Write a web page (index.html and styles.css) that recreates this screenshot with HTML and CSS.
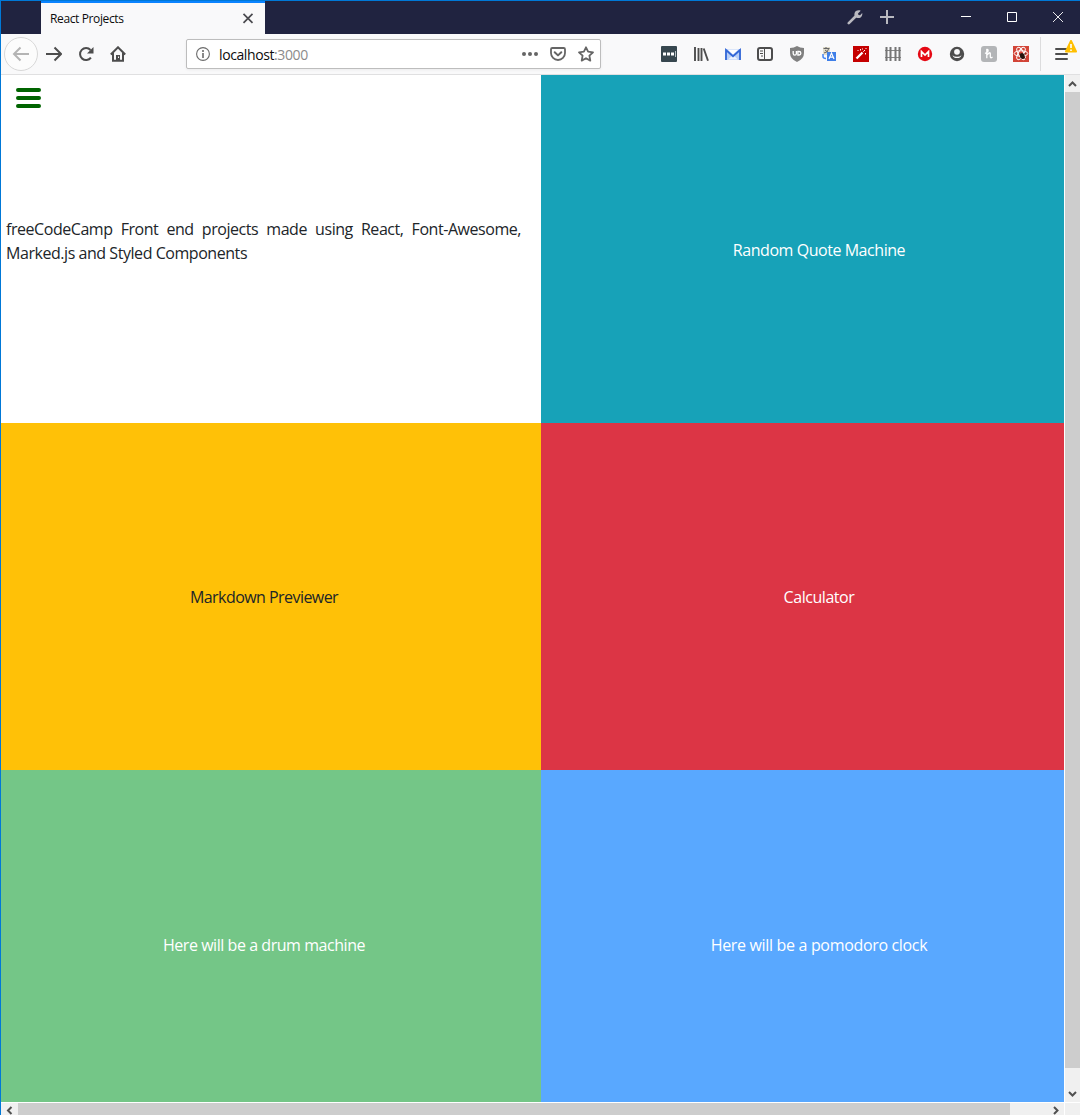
FILE: index.html
```html
<!DOCTYPE html>
<html lang="en">
<head>
<meta charset="utf-8">
<title>React Projects</title>
<link rel="stylesheet" href="styles.css">
</head>
<body>
<div class="window">
  <header class="titlebar">
    <div class="tab"><span class="tab-title">React Projects</span>
      <svg class="tab-close" width="12" height="12" viewBox="0 0 12 12"><path d="M1.500 .8l9 9M10.500 .8l-9 9" stroke="#4a4a4f" stroke-width="1.700"/></svg>
    </div>
    <div class="tab-tools">
      <svg width="16" height="16" viewBox="0 0 16 16"><path d="M1.800 14.200L8.500 7.500" stroke="#b9b9c0" stroke-width="2.600" stroke-linecap="round"/><path d="M13.700 1.700L11 4.400l.5 1.600 1.600.2 2.100-2.300c.6 2.500-1.200 5.100-3.700 5.100-2.700 0-4.600-2.200-4-4.600C8 2 10.800.7 13.700 1.700z" fill="#b9b9c0"/></svg>
      <svg width="16" height="16" viewBox="0 0 16 16"><path d="M8 1v14M1 8h14" stroke="#b9b9c0" stroke-width="2"/></svg>
    </div>
    <div class="window-controls">
      <svg width="12" height="12" viewBox="0 0 12 12"><path d="M1 5.500h10" stroke="#fff"/></svg>
      <svg width="12" height="12" viewBox="0 0 12 12"><path d="M1.500 1.500h9v9h-9z" fill="none" stroke="#fff"/></svg>
      <svg width="12" height="12" viewBox="0 0 12 12"><path d="M1 1l10 10M11 1L1 11" stroke="#fff" stroke-width=".9"/></svg>
    </div>
  </header>

  <div class="toolbar">
    <div class="back"><svg width="18" height="16" viewBox="0 0 18 16"><path d="M17 8H2M8.500 1.500L2 8l6.500 6.500" fill="none" stroke="#b4b4b4" stroke-width="2"/></svg></div>
    <div class="nav">
      <svg width="16" height="16" viewBox="0 0 16 16"><path d="M0 8h14.500M8.500 1.500L15 8l-6.500 6.500" fill="none" stroke="#4d4d4d" stroke-width="2"/></svg>
      <svg width="16" height="16" viewBox="0 0 16 16"><path d="M12.900 11.600A6 6 0 1 1 12.500 4" fill="none" stroke="#4d4d4d" stroke-width="2"/><path d="M15.500 1v6.500H9z" fill="#4d4d4d"/></svg>
      <svg width="16" height="16" viewBox="0 0 16 16"><path d="M.8 8.500L8 1.300l7.200 7.200M3 7v7.800h10V7" fill="none" stroke="#4d4d4d" stroke-width="2"/><path d="M6 9h4v6H6z" fill="#4d4d4d"/><path d="M8 10.500h1v1.500H8z" fill="#f9f9fa"/></svg>
    </div>
    <div class="urlbar">
      <svg width="14" height="14" viewBox="0 0 14 14"><circle cx="7" cy="7" r="6.400" fill="none" stroke="#6b6b6b" stroke-width="1.100"/><path d="M7 6v5M7 3v2" stroke="#6b6b6b" stroke-width="1.600"/></svg>
      <span class="url">localhost<span class="port">:3000</span></span>
      <svg width="16" height="16" viewBox="0 0 16 16"><g fill="#656565"><circle cx="2" cy="8" r="2"/><circle cx="8" cy="8" r="2"/><circle cx="14" cy="8" r="2"/></g></svg>
      <svg width="16" height="16" viewBox="0 0 16 16"><path d="M2.300 2h11.400q1.300 0 1.300 1.300V7a7 7 0 0 1-14 0V3.300Q1 2 2.300 2z" fill="none" stroke="#656565" stroke-width="1.800"/><path d="M4.700 6.200L8 9.400l3.300-3.200" fill="none" stroke="#656565" stroke-width="2" stroke-linecap="round" stroke-linejoin="round"/></svg>
      <svg width="16" height="16" viewBox="0 0 16 16"><path d="M8 1.300l2.100 4.400 4.900.6-3.600 3.400.9 4.900L8 12.200l-4.300 2.400.9-4.900L1 6.300l4.900-.6z" fill="none" stroke="#656565" stroke-width="1.800" stroke-linejoin="round"/></svg>
    </div>
    <div class="extensions">
      <svg width="16" height="16" viewBox="0 0 16 16"><rect width="16" height="16" rx="1" fill="#37474f"/><path d="M2 6.500h3v3H2zM6 6.500h3v3H6zM10 6.500h3v3h-3z" fill="#fff"/><path d="M14.500 5v6" stroke="#b9c1c5"/></svg>
      <svg width="16" height="16" viewBox="0 0 16 16"><path d="M2 1v14M5.500 2v13M8.500 2v13M10.700 2.500L15 14.700" stroke="#4d4d4d" stroke-width="1.900"/></svg>
      <svg width="16" height="16" viewBox="0 0 16 16"><path d="M0 3h16v11H0z" fill="#b8cff6"/><path d="M2.500 3.500h11L8 8.500z" fill="#fff"/><path d="M3 13.500l5-4.500 5 4.500z" fill="#edf3fd"/><path d="M1 14V4l7 6.200L15 4v10" fill="none" stroke="#3367d6" stroke-width="1.800"/></svg>
      <svg width="16" height="16" viewBox="0 0 16 16"><rect x="1" y="2" width="14" height="12" rx="2" fill="none" stroke="#4d4d4d" stroke-width="2"/><path d="M7.500 2v12M3 5h3M3 7.500h3M4 10h2" stroke="#4d4d4d"/></svg>
      <svg width="16" height="16" viewBox="0 0 16 16"><path d="M8 0q3 2 7 2v5q0 6-7 9Q1 13 1 7V2q4 0 7-2z" fill="#808080"/><path d="M4.200 5v2.500q0 1.600 1.600 1.600T7.400 7.500V5M8.900 5.500h1.200a1.700 1.700 0 0 1 0 3.500H8.900z" fill="none" stroke="#fff" stroke-width="1.300"/></svg>
      <svg width="16" height="16" viewBox="0 0 16 16"><path d="M2 1h7v8H2z" fill="#e2ddcc"/><path d="M2.500 2.500h6M5 1v1.500M7.500 3Q7 6.500 3 7M4 4l4 3" fill="none" stroke="#666" stroke-width="1"/><path d="M2 8v2.500q0 2 3 2" fill="none" stroke="#4285f4" stroke-width="1.500"/><path d="M6 6h9v9H6z" fill="#3f7fe8"/><path d="M8 13l2.500-6 2.500 6M9 11.100h3" fill="none" stroke="#fff" stroke-width="1.200"/></svg>
      <svg width="16" height="16" viewBox="0 0 16 16"><path d="M0 0h16v16H0z" fill="#c50000"/><path d="M3.500 12.500l6-6" stroke="#fff" stroke-width="2.300"/><path d="M10.300 5.700L12 4M7.500 3v1.500M5 4v1M12.500 7v1.500M12.500 2.500h1M9 3h1" stroke="#fff" stroke-width="1"/></svg>
      <svg width="16" height="16" viewBox="0 0 16 16"><path d="M0 4.500h16M0 11.500h16" stroke="#858585" stroke-width="1"/><path d="M1.500 1v14M5.500 1v14M10.500 1v14M14.500 1v14" stroke="#757575" stroke-width="2"/></svg>
      <svg width="16" height="16" viewBox="0 0 16 16"><circle cx="8" cy="8" r="7.200" fill="#e50914"/><path d="M4.500 11V5.500L8 9l3.500-3.500V11" fill="none" stroke="#fff" stroke-width="1.700"/></svg>
      <svg width="16" height="16" viewBox="0 0 16 16"><circle cx="8" cy="8" r="7.200" fill="#4d4d4d"/><circle cx="8" cy="5.800" r="2.900" fill="#f9f9fa"/><path d="M3.500 9.200a4.700 4.100 0 0 0 9 0Q11 10.800 8 10.800T3.500 9.200z" fill="#f9f9fa"/></svg>
      <svg width="16" height="16" viewBox="0 0 16 16"><rect width="16" height="16" rx="3" fill="#b3b5b7"/><path d="M5.800 12.200V3.500q2-.3 1 2.200L4 7.500M5.800 9.200Q9.300 5 9.300 8v3q.2 1.500 2.200 0" fill="none" stroke="#fff" stroke-width="1.300"/></svg>
      <svg width="16" height="16" viewBox="0 0 16 16"><path d="M0 0h16v16H0z" fill="#d24437"/><g fill="none" stroke="#fff" stroke-width="1"><ellipse cx="8" cy="7.500" rx="6.800" ry="2.700"/><ellipse cx="8" cy="7.500" rx="6.800" ry="2.700" transform="rotate(60 8 7.500)"/><ellipse cx="8" cy="7.500" rx="6.800" ry="2.700" transform="rotate(120 8 7.500)"/></g><ellipse cx="9.300" cy="10" rx="2.300" ry="3" fill="#25140f" transform="rotate(-25 9.300 10)"/><path d="M6.500 8l6 4.500M12.500 7l-5.500 5.500" stroke="#25140f" stroke-width=".9"/></svg>
    </div>
    <div class="menu">
      <svg width="14" height="14" viewBox="0 0 14 14"><path d="M1 2h11M1 7h11M1 12h11" stroke="#4d4d4d" stroke-width="2" stroke-linecap="round"/></svg>
      <svg class="warning" width="14" height="13" viewBox="0 0 14 13"><path d="M7 1l5 10.500H2z" fill="#ffbf00" stroke="#ffbf00" stroke-width="2" stroke-linejoin="round"/><path d="M7 4v4M7 9.500V11" stroke="#fff" stroke-width="1.600"/></svg>
    </div>
  </div>

  <div class="viewport">
    <main class="projects">
      <section class="tile intro">
        <svg class="hamburger" width="25" height="20" viewBox="0 0 25 20"><path d="M2 2h21M2 10h21M2 18h21" stroke="#006400" stroke-width="4" stroke-linecap="round"/></svg>
        <p class="intro-text"><span class="line">freeCodeCamp Front end projects made using React, Font-Awesome,</span> <span class="line-end">Marked.js and Styled Components</span></p>
      </section>
      <section class="tile quote"><span>Random Quote Machine</span></section>
      <section class="tile markdown"><span>Markdown Previewer</span></section>
      <section class="tile calculator"><span>Calculator</span></section>
      <section class="tile drum"><span>Here will be a drum machine</span></section>
      <section class="tile pomodoro"><span>Here will be a pomodoro clock</span></section>
    </main>
    <div class="scroll-y">
      <svg width="15" height="17" viewBox="0 0 15 17"><path d="M4 11l3.500-3.500L11 11" fill="none" stroke="#505050" stroke-width="2"/></svg>
      <div class="thumb-y"></div>
      <svg class="down" width="15" height="17" viewBox="0 0 15 17"><path d="M4 7l3.500 3.500L11 7" fill="none" stroke="#505050" stroke-width="2"/></svg>
    </div>
    <div class="scroll-x">
      <svg width="17" height="12" viewBox="0 0 17 12"><path d="M10.500 4L7 7.500l3.500 3.500" fill="none" stroke="#505050" stroke-width="2"/></svg>
      <div class="thumb-x"></div>
      <svg class="right" width="17" height="12" viewBox="0 0 17 12"><path d="M7 4l3.500 3.500L7 11" fill="none" stroke="#505050" stroke-width="2"/></svg>
    </div>
    <div class="corner"></div>
  </div>
</div>
</body>
</html>
```
FILE: styles.css
```css
* { box-sizing: border-box; }
html, body { margin: 0; height: 100%; overflow: hidden; }
body { font-family: "Open Sans", "Noto Sans", sans-serif; }
svg { display: block; flex: none; }

.window {
  width: 1080px;
  height: 1115px;
  display: flex;
  flex-direction: column;
  border: solid #0078d7;
  border-width: 1px 0 0 1px;
}

.titlebar {
  height: 33px;
  flex: none;
  display: flex;
  padding-left: 40px;
  background: #202340;
}
.tab {
  width: 224px;
  display: flex;
  align-items: center;
  justify-content: space-between;
  padding: 0 11px 0 9px;
  border-top: 2px solid #0a84ff;
  background: #f9f9fa;
}
.tab-title { font-size: 12px; letter-spacing: -0.38px; color: #0c0c0d; }
.tab-tools { display: flex; gap: 16px; margin-left: auto; padding-top: 8px; }
.window-controls { display: flex; gap: 34px; padding: 10px 16px 0 65px; }

.toolbar {
  height: 41px;
  flex: none;
  display: flex;
  align-items: center;
  padding-left: 3px;
  background: #f9f9fa;
  border-bottom: 1px solid #e0e0e1;
}
.back {
  width: 34px;
  height: 34px;
  display: grid;
  place-items: center;
  border: 1px solid #d8d8d8;
  border-radius: 50%;
  background: #fcfcfc;
}
.nav { display: flex; gap: 16px; margin-left: 8px; }
.urlbar {
  width: 415px;
  height: 30px;
  display: flex;
  align-items: center;
  margin-left: 60px;
  padding: 0 6px 0 9px;
  gap: 12px;
  border: 1px solid #bdbdbd;
  border-radius: 2px;
  background: #fff;
  box-shadow: 0 1px 3px rgba(0, 0, 0, .06);
}
.url { flex: 1; margin-left: -3px; font-size: 14px; letter-spacing: -0.4px; color: #0c0c0d; }
.port { color: #8b8b8b; }
.extensions { display: flex; gap: 16px; margin-left: 60px; }
.menu {
  height: 34px;
  display: flex;
  align-items: center;
  position: relative;
  margin-left: 11px;
  padding-left: 14px;
  border-left: 1px solid #dcdcdd;
}
.warning { position: absolute; left: 23px; top: 3px; }

.viewport {
  flex: 1;
  min-height: 0;
  display: grid;
  grid-template-columns: 1063px 15px;
  grid-template-rows: 1027px 12px;
  gap: 1px;
  background: #fff;
}
.projects {
  display: grid;
  grid-template-columns: 540px 556px;
  grid-template-rows: 348px 347px 348px;
  overflow: hidden;
}
.tile {
  display: flex;
  align-items: center;
  justify-content: center;
  padding-top: 1px;
  font-size: 16px;
  line-height: 24px;
  letter-spacing: -0.45px;
  color: #fff;
}
.intro { position: relative; background: #fff; justify-content: flex-start; padding: 0 0 0 5px; color: #212529; }
.hamburger { position: absolute; left: 15px; top: 13px; }
.intro-text { width: 515px; margin: 0 0 16px; }
.line, .line-end { display: block; white-space: nowrap; }
.line { text-align-last: justify; }
.quote { background: #17a2b8; }
.markdown { background: #ffc107; color: #212529; padding-right: 14px; letter-spacing: -0.55px; }
.calculator { background: #dc3545; }
.drum { background: #74c687; padding: 2px 14px 0 0; }
.pomodoro { background: #59a8ff; padding-top: 2px; letter-spacing: -0.33px; }

.scroll-y { display: flex; flex-direction: column; background: #f0f0f0; }
.thumb-y { height: 976px; background: #cdcdcd; }
.down { margin-top: auto; }
.scroll-x { display: flex; background: #f0f0f0; }
.thumb-x { width: 992px; background: #cdcdcd; }
.right { margin-left: auto; }
.corner { background: #f0f0f0; }
```
